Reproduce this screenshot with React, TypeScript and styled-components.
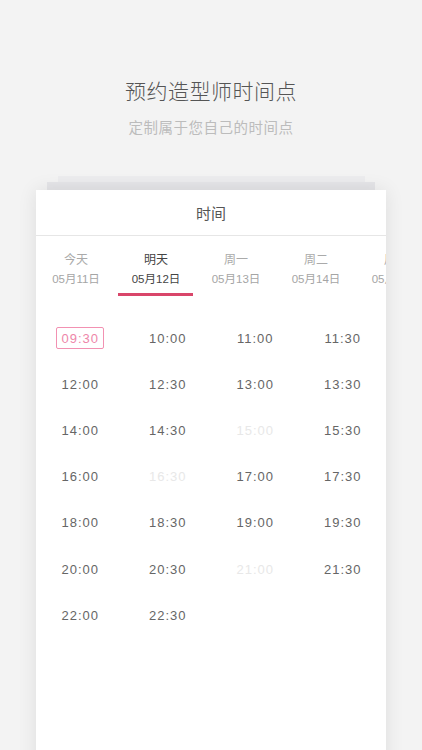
import React from 'react'
import styled, { createGlobalStyle } from 'styled-components'

const GlobalStyle = createGlobalStyle`
  html, body {
    margin: 0;
    padding: 0;
    background: #f3f3f3;
    font-family: "Liberation Sans", "Noto Sans CJK SC", sans-serif;
  }
`

const Page = styled.div`
  width: 422px;
  height: 750px;
  overflow: hidden;
  display: flex;
  flex-direction: column;
  align-items: center;
  padding-top: 77px;
  box-sizing: border-box;
`

const Title = styled.h1`
  margin: 0;
  font-size: 21px;
  line-height: 30px;
  font-weight: 300;
  color: #555;
  letter-spacing: 0.5px;
`

const Subtitle = styled.p`
  margin: 10px 0 0;
  font-size: 14.5px;
  line-height: 22px;
  color: #bcbcbc;
  letter-spacing: 0.5px;
`

const Ledge = styled.div<{ $w: number; $h: number; $bg: string }>`
  width: ${p => p.$w}px;
  height: ${p => p.$h}px;
  background: ${p => p.$bg};
  flex-shrink: 0;
`

const Card = styled.div`
  width: 350px;
  flex: 1;
  background: #fff;
  box-shadow: 0 0 18px rgba(0, 0, 0, 0.09);
  display: flex;
  flex-direction: column;
  flex-shrink: 0;
  min-height: 600px;
`

const CardHeader = styled.div`
  height: 45px;
  display: flex;
  align-items: center;
  justify-content: center;
  font-size: 15px;
  color: #555;
  border-bottom: 1px solid #e6e6e6;
`

const Tabs = styled.div`
  display: flex;
  overflow: hidden;
`

const Tab = styled.div<{ $active?: boolean }>`
  flex: 0 0 80px;
  display: flex;
  flex-direction: column;
  align-items: center;
  padding-top: 15px;
  height: 60px;
  box-sizing: border-box;
  position: relative;

  &::after {
    content: '';
    display: ${p => (p.$active ? 'block' : 'none')};
    position: absolute;
    bottom: 0;
    left: 2px;
    right: 3px;
    height: 3px;
    background: #d9466a;
  }
`

const TabDay = styled.span<{ $active?: boolean }>`
  font-size: 12px;
  line-height: 18px;
  color: ${p => (p.$active ? '#444' : '#aaa')};
`

const TabDate = styled.span<{ $active?: boolean }>`
  font-size: 11.5px;
  line-height: 20px;
  color: ${p => (p.$active ? '#444' : '#a5a5a5')};
  white-space: nowrap;
`

const Grid = styled.div`
  display: grid;
  grid-template-columns: repeat(4, 1fr);
  grid-auto-rows: 46.2px;
  padding-top: 19px;
`

const Cell = styled.div`
  display: flex;
  align-items: center;
  justify-content: center;
`

const Slot = styled.span<{ $state: 'normal' | 'selected' | 'disabled' }>`
  font-size: 13px;
  letter-spacing: 1px;
  width: 48px;
  height: 22px;
  box-sizing: border-box;
  display: flex;
  align-items: center;
  justify-content: center;
  padding-left: 1px;
  border-radius: 2px;
  border: 1px solid ${p => (p.$state === 'selected' ? '#f291b2' : 'transparent')};
  color: ${p =>
    p.$state === 'selected' ? '#ee86a9' : p.$state === 'disabled' ? '#e8e8e8' : '#666'};
`

const days = [
  { day: '今天', date: '05月11日' },
  { day: '明天', date: '05月12日' },
  { day: '周一', date: '05月13日' },
  { day: '周二', date: '05月14日' },
  { day: '周三', date: '05月15日' },
]

const slots = [
  '09:30', '10:00', '11:00', '11:30',
  '12:00', '12:30', '13:00', '13:30',
  '14:00', '14:30', '15:00', '15:30',
  '16:00', '16:30', '17:00', '17:30',
  '18:00', '18:30', '19:00', '19:30',
  '20:00', '20:30', '21:00', '21:30',
  '22:00', '22:30',
]

const disabled = ['15:00', '16:30', '21:00']

export default function App() {
  const activeDay = 1
  const selected = '09:30'

  return (
    <>
      <GlobalStyle />
      <Page>
        <Title>预约造型师时间点</Title>
        <Subtitle>定制属于您自己的时间点</Subtitle>
        <Ledge $w={307} $h={6} $bg="#ececee" style={{ marginTop: 37 }} />
        <Ledge $w={328} $h={8} $bg="#e5e5e8" />
        <Card>
          <CardHeader>时间</CardHeader>
          <Tabs>
            {days.map((d, i) => (
              <Tab key={d.date} $active={i === activeDay}>
                <TabDay $active={i === activeDay}>{d.day}</TabDay>
                <TabDate $active={i === activeDay}>{d.date}</TabDate>
              </Tab>
            ))}
          </Tabs>
          <Grid>
            {slots.map(t => (
              <Cell key={t}>
                <Slot
                  $state={t === selected ? 'selected' : disabled.includes(t) ? 'disabled' : 'normal'}
                >
                  {t}
                </Slot>
              </Cell>
            ))}
          </Grid>
        </Card>
      </Page>
    </>
  )
}
